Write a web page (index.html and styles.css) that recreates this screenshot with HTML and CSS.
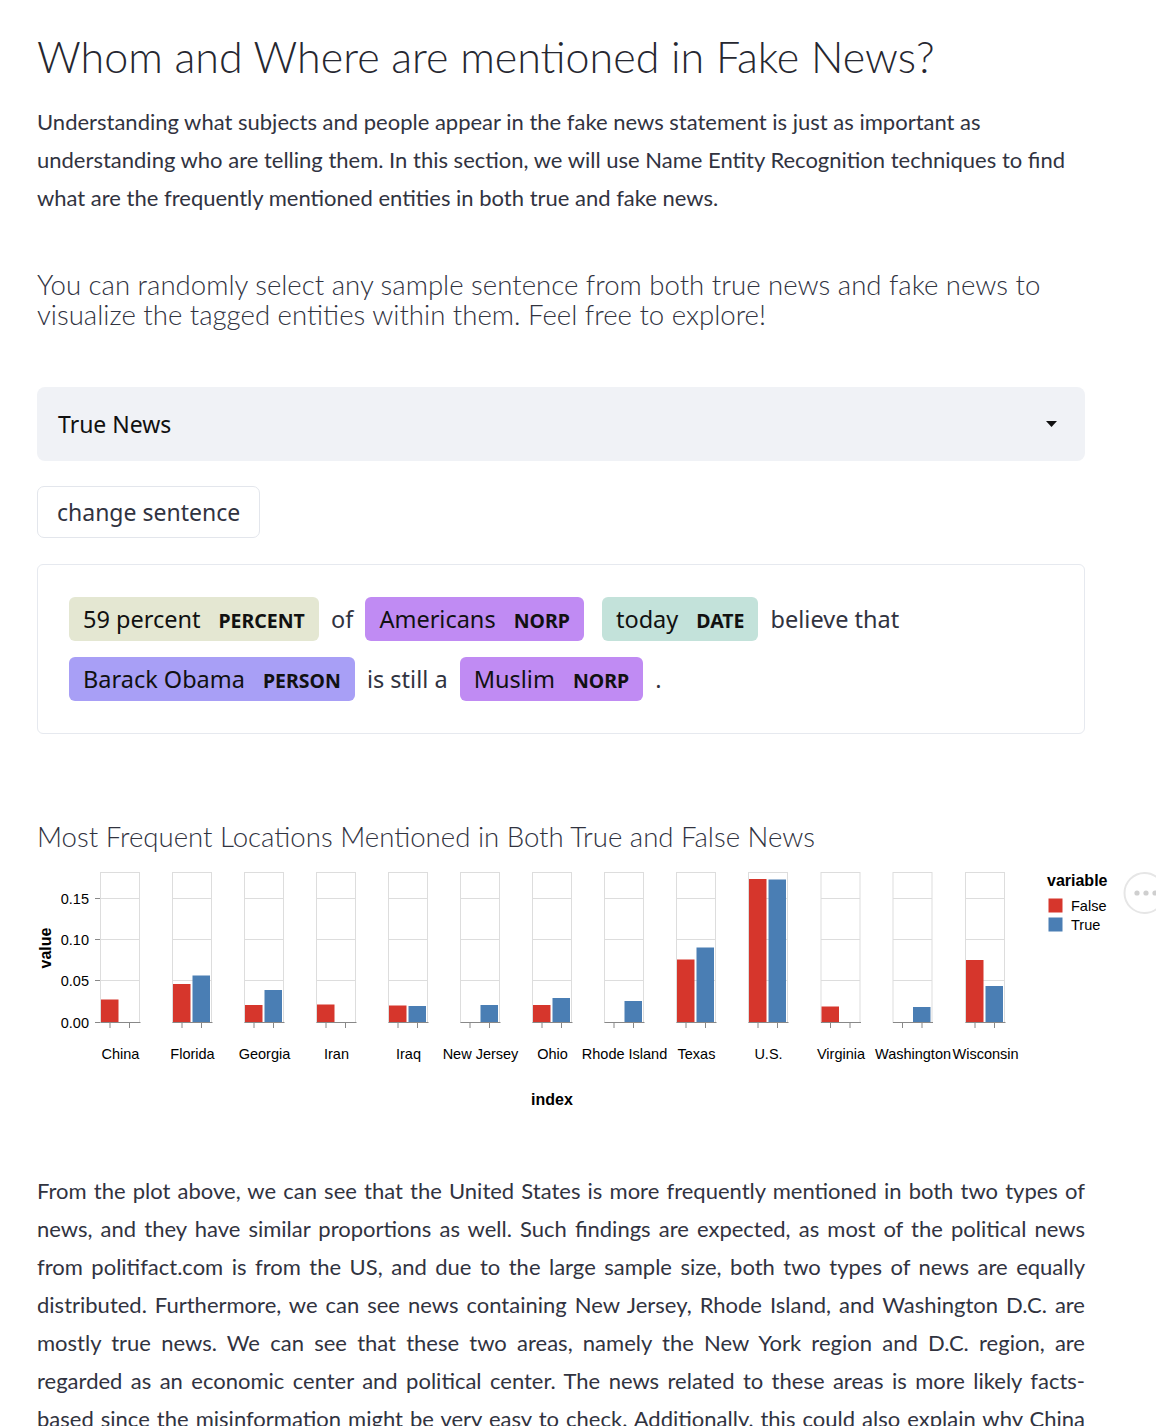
FILE: index.html
```html
<!DOCTYPE html>
<html lang="en">
<head>
<meta charset="utf-8">
<title>Whom and Where are mentioned in Fake News?</title>
<link rel="stylesheet" href="styles.css">
</head>
<body>
<main class="page">
  <h1 class="title">Whom and Where are mentioned in Fake News?</h1>
  <p class="lead">Understanding what subjects and people appear in the fake news statement is just as important as understanding who are telling them. In this section, we will use Name Entity Recognition techniques to find what are the frequently mentioned entities in both true and fake news.</p>
  <h3 class="subhead">You can randomly select any sample sentence from both true news and fake news to visualize the tagged entities within them. Feel free to explore!</h3>

  <div class="select">
    <span class="select-value">True News</span>
    <svg class="caret" width="11" height="6" viewBox="0 0 11 6"><path d="M0 0 H11 L5.5 6 Z" fill="#111"/></svg>
  </div>

  <button class="btn">change sentence</button>

  <div class="entities">
    <mark class="ent percent">59 percent<span class="lbl">PERCENT</span></mark> of <mark class="ent norp">Americans<span class="lbl">NORP</span></mark> <mark class="ent date">today<span class="lbl">DATE</span></mark> believe that <mark class="ent person">Barack Obama<span class="lbl">PERSON</span></mark> is still a <mark class="ent norp">Muslim<span class="lbl">NORP</span></mark> .
  </div>

  <h3 class="chart-title">Most Frequent Locations Mentioned in Both True and False News</h3>

  <svg class="chart" width="1119" height="260" viewBox="37 860 1119 260">
    <g class="yaxis">
      <line x1="100.5" y1="872" x2="100.5" y2="1023" stroke="#888"/>
      <line x1="95" y1="898.5" x2="100" y2="898.5" stroke="#888"/>
      <line x1="95" y1="939.5" x2="100" y2="939.5" stroke="#888"/>
      <line x1="95" y1="980.5" x2="100" y2="980.5" stroke="#888"/>
      <line x1="95" y1="1022.5" x2="100" y2="1022.5" stroke="#888"/>
      <text x="89" y="903.5" text-anchor="end">0.15</text>
      <text x="89" y="944.5" text-anchor="end">0.10</text>
      <text x="89" y="985.5" text-anchor="end">0.05</text>
      <text x="89" y="1027.5" text-anchor="end">0.00</text>
      <text class="axis-title" transform="translate(51 948) rotate(-90)" text-anchor="middle">value</text>
    </g>

    <g transform="translate(100.5 0)">
      <rect class="frame" x="0" y="872.5" width="39" height="150"/>
      <line class="grid" x1="0" y1="898.5" x2="39" y2="898.5"/><line class="grid" x1="0" y1="939.5" x2="39" y2="939.5"/><line class="grid" x1="0" y1="980.5" x2="39" y2="980.5"/>
      <rect class="f" x="0.5" y="999.5" width="17.5" height="22.5"/>
      <line class="dom" x1="0" y1="1022.5" x2="40" y2="1022.5"/><line class="dom" x1="9.5" y1="1022" x2="9.5" y2="1028"/><line class="dom" x1="29" y1="1022" x2="29" y2="1028"/>
      <text x="20" y="1059" text-anchor="middle">China</text>
    </g>
    <g transform="translate(172.5 0)">
      <rect class="frame" x="0" y="872.5" width="39" height="150"/>
      <line class="grid" x1="0" y1="898.5" x2="39" y2="898.5"/><line class="grid" x1="0" y1="939.5" x2="39" y2="939.5"/><line class="grid" x1="0" y1="980.5" x2="39" y2="980.5"/>
      <rect class="f" x="0.5" y="984" width="17.5" height="38"/>
      <rect class="t" x="20" y="975.5" width="17.5" height="46.5"/>
      <line class="dom" x1="0" y1="1022.5" x2="40" y2="1022.5"/><line class="dom" x1="9.5" y1="1022" x2="9.5" y2="1028"/><line class="dom" x1="29" y1="1022" x2="29" y2="1028"/>
      <text x="20" y="1059" text-anchor="middle">Florida</text>
    </g>
    <g transform="translate(244.5 0)">
      <rect class="frame" x="0" y="872.5" width="39" height="150"/>
      <line class="grid" x1="0" y1="898.5" x2="39" y2="898.5"/><line class="grid" x1="0" y1="939.5" x2="39" y2="939.5"/><line class="grid" x1="0" y1="980.5" x2="39" y2="980.5"/>
      <rect class="f" x="0.5" y="1005" width="17.5" height="17"/>
      <rect class="t" x="20" y="990" width="17.5" height="32"/>
      <line class="dom" x1="0" y1="1022.5" x2="40" y2="1022.5"/><line class="dom" x1="9.5" y1="1022" x2="9.5" y2="1028"/><line class="dom" x1="29" y1="1022" x2="29" y2="1028"/>
      <text x="20" y="1059" text-anchor="middle">Georgia</text>
    </g>
    <g transform="translate(316.5 0)">
      <rect class="frame" x="0" y="872.5" width="39" height="150"/>
      <line class="grid" x1="0" y1="898.5" x2="39" y2="898.5"/><line class="grid" x1="0" y1="939.5" x2="39" y2="939.5"/><line class="grid" x1="0" y1="980.5" x2="39" y2="980.5"/>
      <rect class="f" x="0.5" y="1004.5" width="17.5" height="17.5"/>
      <line class="dom" x1="0" y1="1022.5" x2="40" y2="1022.5"/><line class="dom" x1="9.5" y1="1022" x2="9.5" y2="1028"/><line class="dom" x1="29" y1="1022" x2="29" y2="1028"/>
      <text x="20" y="1059" text-anchor="middle">Iran</text>
    </g>
    <g transform="translate(388.5 0)">
      <rect class="frame" x="0" y="872.5" width="39" height="150"/>
      <line class="grid" x1="0" y1="898.5" x2="39" y2="898.5"/><line class="grid" x1="0" y1="939.5" x2="39" y2="939.5"/><line class="grid" x1="0" y1="980.5" x2="39" y2="980.5"/>
      <rect class="f" x="0.5" y="1005.5" width="17.5" height="16.5"/>
      <rect class="t" x="20" y="1006" width="17.5" height="16"/>
      <line class="dom" x1="0" y1="1022.5" x2="40" y2="1022.5"/><line class="dom" x1="9.5" y1="1022" x2="9.5" y2="1028"/><line class="dom" x1="29" y1="1022" x2="29" y2="1028"/>
      <text x="20" y="1059" text-anchor="middle">Iraq</text>
    </g>
    <g transform="translate(460.5 0)">
      <rect class="frame" x="0" y="872.5" width="39" height="150"/>
      <line class="grid" x1="0" y1="898.5" x2="39" y2="898.5"/><line class="grid" x1="0" y1="939.5" x2="39" y2="939.5"/><line class="grid" x1="0" y1="980.5" x2="39" y2="980.5"/>
      <rect class="t" x="20" y="1005" width="17.5" height="17"/>
      <line class="dom" x1="0" y1="1022.5" x2="40" y2="1022.5"/><line class="dom" x1="9.5" y1="1022" x2="9.5" y2="1028"/><line class="dom" x1="29" y1="1022" x2="29" y2="1028"/>
      <text x="20" y="1059" text-anchor="middle">New Jersey</text>
    </g>
    <g transform="translate(532.5 0)">
      <rect class="frame" x="0" y="872.5" width="39" height="150"/>
      <line class="grid" x1="0" y1="898.5" x2="39" y2="898.5"/><line class="grid" x1="0" y1="939.5" x2="39" y2="939.5"/><line class="grid" x1="0" y1="980.5" x2="39" y2="980.5"/>
      <rect class="f" x="0.5" y="1005" width="17.5" height="17"/>
      <rect class="t" x="20" y="998" width="17.5" height="24"/>
      <line class="dom" x1="0" y1="1022.5" x2="40" y2="1022.5"/><line class="dom" x1="9.5" y1="1022" x2="9.5" y2="1028"/><line class="dom" x1="29" y1="1022" x2="29" y2="1028"/>
      <text x="20" y="1059" text-anchor="middle">Ohio</text>
    </g>
    <g transform="translate(604.5 0)">
      <rect class="frame" x="0" y="872.5" width="39" height="150"/>
      <line class="grid" x1="0" y1="898.5" x2="39" y2="898.5"/><line class="grid" x1="0" y1="939.5" x2="39" y2="939.5"/><line class="grid" x1="0" y1="980.5" x2="39" y2="980.5"/>
      <rect class="t" x="20" y="1001" width="17.5" height="21"/>
      <line class="dom" x1="0" y1="1022.5" x2="40" y2="1022.5"/><line class="dom" x1="9.5" y1="1022" x2="9.5" y2="1028"/><line class="dom" x1="29" y1="1022" x2="29" y2="1028"/>
      <text x="20" y="1059" text-anchor="middle">Rhode Island</text>
    </g>
    <g transform="translate(676.5 0)">
      <rect class="frame" x="0" y="872.5" width="39" height="150"/>
      <line class="grid" x1="0" y1="898.5" x2="39" y2="898.5"/><line class="grid" x1="0" y1="939.5" x2="39" y2="939.5"/><line class="grid" x1="0" y1="980.5" x2="39" y2="980.5"/>
      <rect class="f" x="0.5" y="959.5" width="17.5" height="62.5"/>
      <rect class="t" x="20" y="947.5" width="17.5" height="74.5"/>
      <line class="dom" x1="0" y1="1022.5" x2="40" y2="1022.5"/><line class="dom" x1="9.5" y1="1022" x2="9.5" y2="1028"/><line class="dom" x1="29" y1="1022" x2="29" y2="1028"/>
      <text x="20" y="1059" text-anchor="middle">Texas</text>
    </g>
    <g transform="translate(748.5 0)">
      <rect class="frame" x="0" y="872.5" width="39" height="150"/>
      <line class="grid" x1="0" y1="898.5" x2="39" y2="898.5"/><line class="grid" x1="0" y1="939.5" x2="39" y2="939.5"/><line class="grid" x1="0" y1="980.5" x2="39" y2="980.5"/>
      <rect class="f" x="0.5" y="879" width="17.5" height="143"/>
      <rect class="t" x="20" y="879.5" width="17.5" height="142.5"/>
      <line class="dom" x1="0" y1="1022.5" x2="40" y2="1022.5"/><line class="dom" x1="9.5" y1="1022" x2="9.5" y2="1028"/><line class="dom" x1="29" y1="1022" x2="29" y2="1028"/>
      <text x="20" y="1059" text-anchor="middle">U.S.</text>
    </g>
    <g transform="translate(821 0)">
      <rect class="frame" x="0" y="872.5" width="39" height="150"/>
      <line class="grid" x1="0" y1="898.5" x2="39" y2="898.5"/><line class="grid" x1="0" y1="939.5" x2="39" y2="939.5"/><line class="grid" x1="0" y1="980.5" x2="39" y2="980.5"/>
      <rect class="f" x="0.5" y="1006.5" width="17.5" height="15.5"/>
      <line class="dom" x1="0" y1="1022.5" x2="40" y2="1022.5"/><line class="dom" x1="9.5" y1="1022" x2="9.5" y2="1028"/><line class="dom" x1="29" y1="1022" x2="29" y2="1028"/>
      <text x="20" y="1059" text-anchor="middle">Virginia</text>
    </g>
    <g transform="translate(893 0)">
      <rect class="frame" x="0" y="872.5" width="39" height="150"/>
      <line class="grid" x1="0" y1="898.5" x2="39" y2="898.5"/><line class="grid" x1="0" y1="939.5" x2="39" y2="939.5"/><line class="grid" x1="0" y1="980.5" x2="39" y2="980.5"/>
      <rect class="t" x="20" y="1007" width="17.5" height="15"/>
      <line class="dom" x1="0" y1="1022.5" x2="40" y2="1022.5"/><line class="dom" x1="9.5" y1="1022" x2="9.5" y2="1028"/><line class="dom" x1="29" y1="1022" x2="29" y2="1028"/>
      <text x="20" y="1059" text-anchor="middle">Washington</text>
    </g>
    <g transform="translate(965.5 0)">
      <rect class="frame" x="0" y="872.5" width="39" height="150"/>
      <line class="grid" x1="0" y1="898.5" x2="39" y2="898.5"/><line class="grid" x1="0" y1="939.5" x2="39" y2="939.5"/><line class="grid" x1="0" y1="980.5" x2="39" y2="980.5"/>
      <rect class="f" x="0.5" y="960" width="17.5" height="62"/>
      <rect class="t" x="20" y="986" width="17.5" height="36"/>
      <line class="dom" x1="0" y1="1022.5" x2="40" y2="1022.5"/><line class="dom" x1="9.5" y1="1022" x2="9.5" y2="1028"/><line class="dom" x1="29" y1="1022" x2="29" y2="1028"/>
      <text x="20" y="1059" text-anchor="middle">Wisconsin</text>
    </g>

    <text class="axis-title" x="552" y="1105" text-anchor="middle">index</text>

    <g class="legend">
      <text class="axis-title" x="1047" y="886">variable</text>
      <rect class="f" x="1048.5" y="898.5" width="14" height="14"/>
      <text x="1071" y="910.5">False</text>
      <rect class="t" x="1048.5" y="917.5" width="14" height="14"/>
      <text x="1071" y="929.5">True</text>
    </g>

    <g class="actions">
      <circle cx="1144.5" cy="893" r="20" fill="#fff" stroke="#e6e6e6" stroke-width="2"/>
      <circle cx="1137" cy="893" r="2.6" fill="#cfcfcf"/>
      <circle cx="1146" cy="893" r="2.6" fill="#cfcfcf"/>
      <circle cx="1155" cy="893" r="2.6" fill="#cfcfcf"/>
    </g>
  </svg>

  <p class="body-text">From the plot above, we can see that the United States is more frequently mentioned in both two types of news, and they have similar proportions as well. Such findings are expected, as most of the political news from politifact.com is from the US, and due to the large sample size, both two types of news are equally distributed. Furthermore, we can see news containing New Jersey, Rhode Island, and Washington D.C. are mostly true news. We can see that these two areas, namely the New York region and D.C. region, are regarded as an economic center and political center. The news related to these areas is more likely facts-based since the misinformation might be very easy to check. Additionally, this could also explain why China and Iran are mostly mentioned in the fake news, since such statements are much harder to verify.</p>
</main>
</body>
</html>
```

FILE: styles.css
```css
html, body {
  margin: 0;
  padding: 0;
  background: #ffffff;
  overflow: hidden;
}

body {
  font-family: Lato, "Noto Sans", sans-serif;
  color: #31333f;
}

.page {
  width: 1048px;
  padding-left: 37px;
}

.title {
  font-weight: 300;
  font-size: 43px;
  line-height: 58px;
  margin: 28px 0 0;
  color: #262730;
}

.lead {
  font-size: 22px;
  line-height: 38px;
  margin: 17px 0 0;
}

.subhead,
.chart-title {
  font-weight: 300;
  font-size: 27.6px;
  line-height: 30px;
  margin: 53px 0 0;
}

.select {
  margin-top: 57px;
  height: 74px;
  box-sizing: border-box;
  background: #f0f2f6;
  border-radius: 8px;
  display: flex;
  align-items: center;
  justify-content: space-between;
  padding: 0 28px 0 21px;
  font-family: "Noto Sans", sans-serif;
  font-size: 23px;
  color: #111;
}

.caret {
  display: block;
}

.btn {
  display: block;
  margin-top: 25px;
  height: 52px;
  box-sizing: border-box;
  background: #fff;
  border: 1px solid #e3e6ec;
  border-radius: 7px;
  padding: 0 19px;
  font-family: "Noto Sans", sans-serif;
  font-size: 23px;
  color: #31333f;
  white-space: nowrap;
}

.entities {
  margin-top: 26px;
  border: 1px solid #e6e9ef;
  border-radius: 6px;
  padding: 24px 25px 24px;
  font-family: "Noto Sans", sans-serif;
  font-size: 23.5px;
  line-height: 60px;
  color: #31333f;
}

.ent {
  display: inline-block;
  box-sizing: border-box;
  height: 44px;
  line-height: 22px;
  padding: 11px 14px;
  margin: 0 6px;
  border-radius: 6px;
  vertical-align: baseline;
  color: #111;
}

.percent { background: #e4e7d2; }
.norp { background: #c08bf3; }
.date { background: #c3e2da; }
.person { background: #a89ff6; }

.lbl {
  font-size: 19.5px;
  line-height: 1;
  font-weight: 700;
  margin-left: 18px;
}

.chart-title {
  line-height: 34px;
  margin-top: 86px;
}

.chart {
  display: block;
  margin-top: 6px;
  overflow: visible;
  font-family: "Liberation Sans", Arial, sans-serif;
  font-size: 14.5px;
  fill: #000;
}

.chart .frame {
  fill: none;
  stroke: #dddddd;
}

.chart .grid {
  stroke: #dddddd;
}

.chart .dom {
  stroke: #888888;
}

.chart .f { fill: #d6362c; }
.chart .t { fill: #4a7eb4; }

.chart .axis-title {
  font-weight: 700;
  font-size: 16px;
}

.body-text {
  font-size: 22px;
  line-height: 38px;
  margin: 52px 0 0;
  text-align: justify;
}
```
